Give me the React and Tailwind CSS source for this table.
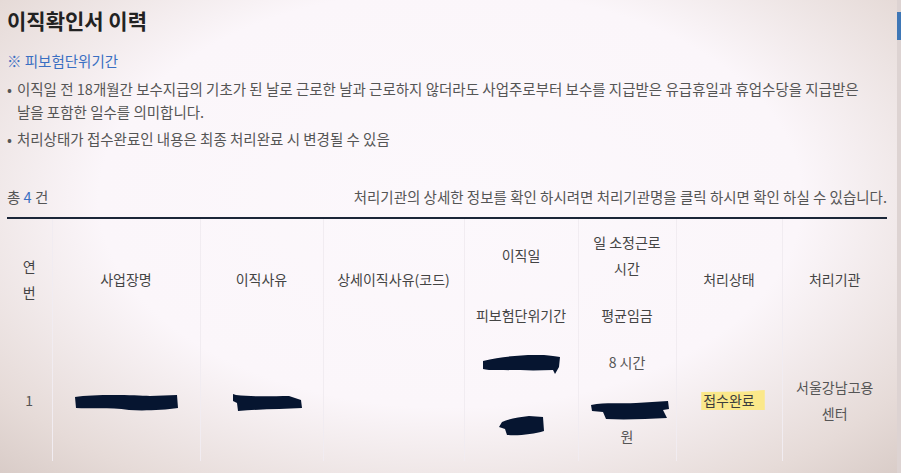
import React from "react";

const ink = "#061530";

function Redact({ w, h, d, className = "" }) {
  return (
    <svg width={w} height={h} viewBox={`0 0 ${w} ${h}`} className={`inline-block align-middle ${className}`}>
      <path d={d} fill={ink} />
    </svg>
  );
}

const headCell = "border-r border-[#f1ecf1] text-center align-middle font-normal text-[#444]";
const bodyCell = "border-r border-[#f1ecf1] text-center align-middle text-[#555]";

export default function App() {
  return (
    <div
      className="relative w-[901px] h-[473px] overflow-hidden bg-[radial-gradient(ellipse_75%_85%_at_50%_42%,#fcf8fc_0%,#fbf6fa_52%,#e6dbd8_82%,#c9bab4_112%)] text-[14.5px] text-[#555]"
      style={{ fontFamily: '"Noto Sans CJK KR", "Noto Sans", sans-serif' }}
    >
      <div className="pl-[7px] pr-[14px]">
        <h1 className="pt-[6px] text-[21px] leading-[28px] font-semibold text-[#222]">이직확인서 이력</h1>

        <p className="mt-[15px] leading-[23px] text-[#3a6fc2]">※ 피보험단위기간</p>

        <ul className="mt-[5px] leading-[23px]">
          <li className="flex gap-[5px]">
            <span className="text-[#555]">•</span>
            <span>
              이직일 전 18개월간 보수지급의 기초가 된 날로 근로한 날과 근로하지 않더라도 사업주로부터 보수를 지급받은 유급휴일과 휴업수당을 지급받은
              <br />
              날을 포함한 일수를 의미합니다.
            </span>
          </li>
          <li className="mt-[4px] flex gap-[5px]">
            <span className="text-[#555]">•</span>
            <span>처리상태가 접수완료인 내용은 최종 처리완료 시 변경될 수 있음</span>
          </li>
        </ul>

        <div className="mt-[35px] pb-[9px] flex justify-between leading-[23px]">
          <span>
            총 <span className="text-[#3a6fc2]">4</span> 건
          </span>
          <span>처리기관의 상세한 정보를 확인 하시려면 처리기관명을 클릭 하시면 확인 하실 수 있습니다.</span>
        </div>

        <table className="w-[880px] table-fixed border-collapse border-t-2 border-[#1b2638] text-[14px] leading-[26px]">
          <colgroup>
            <col className="w-[45px]" />
            <col className="w-[148px]" />
            <col className="w-[123px]" />
            <col className="w-[141px]" />
            <col className="w-[114px]" />
            <col className="w-[98px]" />
            <col className="w-[106px]" />
            <col className="w-[105px]" />
          </colgroup>
          <thead>
            <tr className="h-[73px]">
              <th rowSpan={2} className={headCell}>
                연<br />번
              </th>
              <th rowSpan={2} className={headCell}>사업장명</th>
              <th rowSpan={2} className={headCell}>이직사유</th>
              <th rowSpan={2} className={headCell}>상세이직사유(코드)</th>
              <th className={headCell}>이직일</th>
              <th className={headCell}>
                일 소정근로<br />시간
              </th>
              <th rowSpan={2} className={headCell}>처리상태</th>
              <th rowSpan={2} className="text-center align-middle font-normal text-[#444]">처리기관</th>
            </tr>
            <tr className="h-[48px]">
              <th className={headCell}>피보험단위기간</th>
              <th className={headCell}>평균임금</th>
            </tr>
          </thead>
          <tbody>
            <tr className="h-[46px]">
              <td rowSpan={2} className={`${bodyCell} text-[#6a5a78]`}>1</td>
              <td rowSpan={2} className={bodyCell}>
                <Redact w={104} h={17} d="M1 3 C20 0 60 1 76 2 L103 1 L104 14 C90 16 70 17 55 16 C35 13 15 15 2 14 Z" />
              </td>
              <td rowSpan={2} className={bodyCell}>
                <Redact w={69} h={17} className="ml-[12px]" d="M0 0 L3 1 C20 3 40 2 56 2 L68 6 L69 14 C50 15 30 15 5 17 L4 9 L0 7 Z" />
              </td>
              <td rowSpan={2} className={bodyCell}></td>
              <td className={bodyCell}>
                <Redact w={77} h={19} d="M0 6 C15 2 30 1 45 0 C60 -1 70 1 77 2 L76 12 L72 19 L70 15 C50 16 30 15 15 15 C8 15 3 15 0 14 Z" />
              </td>
              <td className={bodyCell}>8 시간</td>
              <td rowSpan={2} className={bodyCell}>
                <span className="ml-[8px] inline-block bg-[#fbe88a] pl-[2px] pr-[10px] leading-[20px] text-[#3d3d3d] [clip-path:polygon(0_10%,70%_8%,100%_0,100%_100%,0_100%)]">
                  접수완료
                </span>
              </td>
              <td rowSpan={2} className="text-center align-middle text-[#555]">
                서울강남고용<br />센터
              </td>
            </tr>
            <tr className="h-[76px]">
              <td className={bodyCell}>
                <Redact w={45} h={21} d="M3 7 C10 4 20 2 30 1 L44 2 L45 16 C35 19 20 21 8 20 L6 14 L0 12 Z" />
              </td>
              <td className={bodyCell}>
                <div className="flex flex-col items-center">
                  <Redact w={78} h={20} className="ml-[6px] my-[3px]" d="M0 5 C15 2 30 4 45 3 L77 1 L78 9 L72 10 L76 18 C55 19 35 20 15 19 L12 12 L1 11 Z" />
                  <span>원</span>
                </div>
              </td>
            </tr>
          </tbody>
        </table>
      </div>

      <div className="absolute right-0 top-0 h-full w-[4px] bg-[#ddd3d2]">
        <div className="mt-[12px] h-[28px] w-full bg-[#3f77b6]" />
      </div>
    </div>
  );
}
